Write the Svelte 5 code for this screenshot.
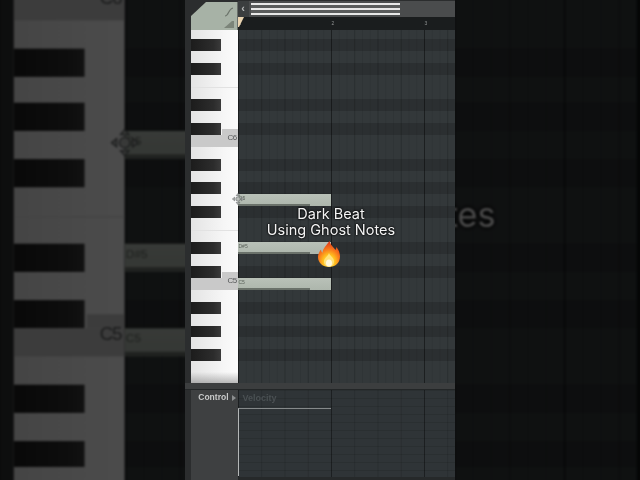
<script lang="ts">
    const blackRows = [1, 3, 6, 8, 11, 13, 15, 18, 20, 23, 25, 27];
    const keyLabels: Record<number, string> = {9: 'C6', 21: 'C5'};
    const notes: Record<number, string> = {14: 'G5', 18: 'D#5', 21: 'C5'};
    const bars = ['1', '2', '3'];
    const rows = Array.from({length: 30}, (_, i) => ({
        index: i,
        black: blackRows.includes(i),
        label: keyLabels[i],
        note: notes[i],
    }));
</script>

{#snippet roll()}
    <div class="roll">
        <div class="strip"></div>

        <div class="tab">
            <svg width="14" height="26" viewBox="0 0 14 26">
                <path d="M2 12c4 0 3-7 8-8" fill="none" stroke="#6d756c" stroke-width="1.2"/>
                <path d="M1 24L9 17l2 0 0 7z" fill="#7b8479"/>
            </svg>
        </div>

        <div class="head">
            <div class="scrollbar">
                <div class="arrow">‹</div>
                <div class="handle"><i></i><i></i><i></i></div>
            </div>
            <div class="timeline">
                <svg class="playhead" width="6" height="10" viewBox="0 0 6 10">
                    <path d="M0 0h6L1 10H0z" fill="#e9d3b0"/>
                </svg>
                {#each bars as bar}
                    <span class="bar">{bar}</span>
                {/each}
            </div>
        </div>

        <div class="strip"></div>

        <div class="keys">
            {#each rows as row}
                <div class="key" class:line={row.index === 5 || row.index === 17} class:root={row.label}>
                    {#if row.black}<div class="black"></div>{/if}
                    {#if row.label}<span class="key-label">{row.label}</span>{/if}
                </div>
            {/each}
        </div>

        <div class="lanes">
            {#each rows as row}
                <div class="lane" class:dark={row.black}>
                    {#if row.note}
                        <div class="note">
                            <span class="note-label">{row.note}</span>
                            <div class="velocity-bar"></div>
                        </div>
                    {/if}
                </div>
            {/each}
        </div>

        <div class="split"></div>

        <div class="strip"></div>
        <div class="control">
            <span>Control</span>
            <svg width="4" height="6" viewBox="0 0 4 6"><path d="M0 0l4 3-4 3z" fill="#8b8d8e"/></svg>
        </div>
        <div class="events">
            <span class="events-label">Velocity</span>
            <div class="velocity"></div>
        </div>

        <div class="caption">
            <div>Dark Beat</div>
            <div>Using Ghost Notes</div>
        </div>

        <svg class="cursor" width="12" height="12" viewBox="0 0 16 16">
            <g fill="#b9bdb9" stroke="#55595a" stroke-width=".7">
                <path d="M8 .5l2.400 3H5.600z"/>
                <path d="M8 15.500l2.400-3H5.600z"/>
                <path d="M.5 8l3-2.400v4.800z"/>
                <path d="M15.500 8l-3-2.400v4.800z"/>
                <circle cx="8" cy="8" r="3"/>
            </g>
        </svg>

        <svg class="flame" width="24" height="28" viewBox="0 0 24 28">
            <defs>
                <radialGradient id="fire" cx=".5" cy=".8" r=".75">
                    <stop offset="0" stop-color="#fff3b0"/>
                    <stop offset=".35" stop-color="#ffc21f"/>
                    <stop offset=".65" stop-color="#f9791c"/>
                    <stop offset="1" stop-color="#df3a1a"/>
                </radialGradient>
            </defs>
            <path d="M12.500 1c1 4 4 6 6 9 .6-1 .8-2 .8-3 2.500 3 3.700 6 3.700 9.500C23 23 18 27 12 27S1 23 1 17c0-3 1.500-5.500 3-7.500.2 1.500.6 2.500 1.500 3.300C6 8 9.500 5.500 12.500 1z" fill="url(#fire)"/>
            <path d="M12 13c.5 2.500 5 4.500 5 8.500 0 3-2.300 5-5 5s-5-2-5-5c0-3.500 4-5 5-8.500z" fill="#ffe27a"/>
            <ellipse cx="12" cy="23" rx="3" ry="3.500" fill="#fff8dc"/>
        </svg>
    </div>
{/snippet}

<div class="page">
    <div class="backdrop">{@render roll()}</div>
    <main class="stage">{@render roll()}</main>
</div>

<style>
    :global(body) {
        margin: 0;
        background: #050606;
    }

    .page {
        position: relative;
        width: 640px;
        height: 480px;
        overflow: hidden;
        display: flex;
        justify-content: center;
        background: #050606;
        font-family: "Liberation Sans", sans-serif;
    }

    /* zoomed, dimmed copy behind the video */
    .backdrop {
        position: absolute;
        inset: 0;
        display: flex;
        justify-content: center;
        transform-origin: 0 0;
        transform: translate(-437px, -325px) scale(2.36, 2.35);
        filter: brightness(0.3) blur(0.5px);
    }

    .stage {
        position: relative;
        filter: blur(0.35px);
    }

    .roll {
        position: relative;
        width: 270px;
        height: 480px;
        display: grid;
        grid-template-columns: 6px 46.5px 217.5px;
        grid-template-rows: 30px 353px 7px 90px;
        background: #2b2d2e;
    }

    .strip {
        background: #2b2d2e;
    }

    .tab {
        background: #a7b2a6;
        clip-path: polygon(0 16px, 15px 2px, 100% 2px, 100% 100%, 0 100%);
        display: flex;
        justify-content: flex-end;
        align-items: flex-end;
        padding-right: 1px;
    }

    .head {
        display: flex;
        flex-direction: column;
        overflow: hidden;
    }

    .scrollbar {
        height: 17px;
        display: flex;
        gap: 2px;
        background: #4a4c4d;
        border-top: 1px solid #2b2d2e;
        box-sizing: border-box;
    }

    .arrow {
        width: 11px;
        background: #3b3e3f;
        color: #b8bbbb;
        font-size: 11px;
        font-weight: bold;
        line-height: 14px;
        text-align: center;
    }

    .handle {
        width: 149px;
        margin-top: 2px;
        height: 12px;
        display: flex;
        flex-direction: column;
        justify-content: space-between;
        background: #5a5c5c;
    }

    .handle i {
        display: block;
        height: 2px;
        background: #e8e8e8;
    }

    .timeline {
        height: 13px;
        display: flex;
        background: #1a1d1e;
        position: relative;
    }

    .playhead {
        position: absolute;
        left: 0;
        top: 0;
    }

    .bar {
        flex: none;
        width: 93px;
        padding-left: 1px;
        box-sizing: border-box;
        color: #8d9090;
        font-size: 5px;
        line-height: 12px;
    }

    .keys,
    .lanes {
        overflow: hidden;
        display: flex;
        flex-direction: column;
    }

    .keys {
        background:
            linear-gradient(transparent 342px, rgba(120, 120, 120, 0.5) 353px),
            linear-gradient(90deg, #e4e4e4, #f6f6f6 70%, #fbfbfb);
    }

    .key,
    .lane {
        flex: none;
        height: 11.93px;
        position: relative;
        top: -2.5px;
    }

    .key {
        display: flex;
        justify-content: space-between;
        align-items: center;
    }

    .key.line {
        box-shadow: inset 0 1px 0 #e2e2e2;
    }

    .key.root {
        background: #c9c9c9;
    }

    .key.root::before {
        content: "";
        position: absolute;
        right: 0;
        top: -6px;
        width: 16px;
        height: 6px;
        background: #c9c9c9;
    }

    .black {
        width: 30px;
        height: 100%;
        position: relative;
        background: linear-gradient(90deg, #1c1c1c, #2c2c2c 75%, #3a3a3a);
    }

    .key-label {
        position: absolute;
        right: 1px;
        top: -2px;
        color: #57595a;
        font-size: 8px;
        letter-spacing: -0.6px;
    }

    .lane {
        display: flex;
        background-color: #33383a;
        background-image:
            linear-gradient(90deg, rgba(0, 0, 0, 0.32) 1px, transparent 1px),
            linear-gradient(90deg, rgba(0, 0, 0, 0.13) 1px, transparent 1px),
            linear-gradient(90deg, rgba(0, 0, 0, 0.07) 1px, transparent 1px);
        background-size: 93px 100%, 23.25px 100%, 7.75px 100%;
    }

    .lane.dark {
        background-color: #2b2f31;
    }

    .note {
        width: 93px;
        height: 100%;
        display: flex;
        flex-direction: column;
        justify-content: space-between;
        background: linear-gradient(#b9c1b8, #adb6ac);
        box-shadow: 0 0 1px #1a1c1d;
    }

    .note-label {
        padding-left: 1px;
        color: #5b625b;
        font-size: 5px;
        line-height: 8px;
    }

    .velocity-bar {
        width: 72px;
        height: 2px;
        background: #6a716a;
    }

    .split {
        grid-column: 1 / 4;
        background: #3c3e3f;
        border-bottom: 1px solid #232627;
    }

    .control {
        background: #3e4041;
        display: flex;
        align-items: flex-start;
        justify-content: flex-end;
        gap: 3px;
        padding: 2px 2px 0 0;
        color: #c8c9c9;
        font-size: 8.500px;
        font-weight: bold;
    }

    .control svg {
        margin-top: 3px;
    }

    .events {
        background-color: #2f3437;
        background-image:
            linear-gradient(90deg, rgba(0, 0, 0, 0.32) 1px, transparent 1px),
            linear-gradient(90deg, rgba(0, 0, 0, 0.13) 1px, transparent 1px),
            linear-gradient(rgba(0, 0, 0, 0.1) 1px, transparent 1px);
        background-size: 93px 100%, 23.25px 100%, 100% 8px;
        border-bottom: 3px solid #26292a;
        display: flex;
        flex-direction: column;
        align-items: flex-start;
    }

    .events-label {
        margin: 3px 0 0 5px;
        color: #4a5053;
        font-size: 9px;
        font-weight: bold;
        line-height: 11px;
    }

    .velocity {
        margin-top: 4px;
        width: 93px;
        height: 68px;
        box-sizing: border-box;
        border-left: 1.5px solid #b4b7b7;
        border-top: 1.5px solid #85898a;
    }

    .caption {
        position: absolute;
        left: 56px;
        top: 206px;
        width: 180px;
        color: #f4f4f4;
        font-family: Inter, sans-serif;
        font-size: 14.500px;
        line-height: 16px;
        text-align: center;
        text-shadow: 0 0 2px #000, 0 0 2px #000;
    }

    .cursor {
        position: absolute;
        left: 47px;
        top: 193px;
    }

    .flame {
        position: absolute;
        left: 132px;
        top: 240px;
    }
</style>
